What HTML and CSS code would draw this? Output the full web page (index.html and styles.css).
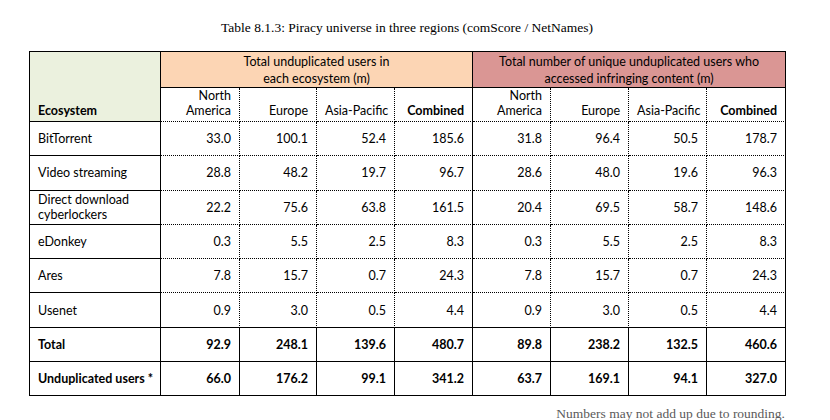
FILE: index.html
```html
<!DOCTYPE html>
<html>
<head>
<meta charset="utf-8">
<link rel="stylesheet" href="styles.css">
</head>
<body>
<div class="page">
  <div class="title">Table 8.1.3: Piracy universe in three regions (comScore / NetNames)</div>
  <table class="data">
    <colgroup>
      <col class="c-eco"><col class="c-a"><col class="c-b"><col class="c-c"><col class="c-d">
      <col class="c-e"><col class="c-f"><col class="c-g"><col class="c-h">
    </colgroup>
    <thead>
      <tr class="hrow1">
        <th class="eco-head" rowspan="2">Ecosystem</th>
        <th class="grp grp1" colspan="4">Total unduplicated users in<br>each ecosystem (m)</th>
        <th class="grp grp2" colspan="4">Total number of unique unduplicated users who<br>accessed infringing content (m)</th>
      </tr>
      <tr class="hrow2">
        <th class="sub">North<br>America</th>
        <th class="sub">Europe</th>
        <th class="sub">Asia-Pacific</th>
        <th class="sub bold gend">Combined</th>
        <th class="sub">North<br>America</th>
        <th class="sub">Europe</th>
        <th class="sub">Asia-Pacific</th>
        <th class="sub bold last">Combined</th>
      </tr>
    </thead>
    <tbody>
      <tr><td class="eco">BitTorrent</td><td>33.0</td><td>100.1</td><td>52.4</td><td class="gend">185.6</td><td>31.8</td><td>96.4</td><td>50.5</td><td class="last">178.7</td></tr>
      <tr><td class="eco">Video streaming</td><td>28.8</td><td>48.2</td><td>19.7</td><td class="gend">96.7</td><td>28.6</td><td>48.0</td><td>19.6</td><td class="last">96.3</td></tr>
      <tr><td class="eco">Direct download<br>cyberlockers</td><td>22.2</td><td>75.6</td><td>63.8</td><td class="gend">161.5</td><td>20.4</td><td>69.5</td><td>58.7</td><td class="last">148.6</td></tr>
      <tr><td class="eco">eDonkey</td><td>0.3</td><td>5.5</td><td>2.5</td><td class="gend">8.3</td><td>0.3</td><td>5.5</td><td>2.5</td><td class="last">8.3</td></tr>
      <tr><td class="eco">Ares</td><td>7.8</td><td>15.7</td><td>0.7</td><td class="gend">24.3</td><td>7.8</td><td>15.7</td><td>0.7</td><td class="last">24.3</td></tr>
      <tr class="pre-total"><td class="eco">Usenet</td><td>0.9</td><td>3.0</td><td>0.5</td><td class="gend">4.4</td><td>0.9</td><td>3.0</td><td>0.5</td><td class="last">4.4</td></tr>
      <tr class="sumrow"><td class="eco">Total</td><td>92.9</td><td>248.1</td><td>139.6</td><td class="gend">480.7</td><td>89.8</td><td>238.2</td><td>132.5</td><td class="last">460.6</td></tr>
      <tr class="sumrow"><td class="eco">Unduplicated users *</td><td>66.0</td><td>176.2</td><td>99.1</td><td class="gend">341.2</td><td>63.7</td><td>169.1</td><td>94.1</td><td class="last">327.0</td></tr>
    </tbody>
  </table>
  <div class="note">Numbers may not add up due to rounding.</div>
</div>
</body>
</html>
```

FILE: styles.css
```css
html, body {
  margin: 0;
  padding: 0;
  background: #ffffff;
}

.page {
  width: 830px;
  padding: 19px 0 0 29px;
  box-sizing: border-box;
  font-family: "Lato", "Liberation Sans", sans-serif;
  color: #000;
}

.title {
  width: 756px;
  text-align: center;
  font-family: "Liberation Serif", serif;
  font-size: 13.5px;
  line-height: 18px;
  margin-bottom: 14px;
  color: #000;
}

.data {
  border-collapse: separate;
  border-spacing: 0;
  table-layout: fixed;
  width: 756px;
  border-top: 1px solid #000;
  border-left: 1px solid #000;
  font-size: 12.5px;
}

.c-eco { width: 131px; }
.c-a { width: 79px; }
.c-b { width: 77px; }
.c-c { width: 78px; }
.c-d { width: 78px; }
.c-e { width: 78px; }
.c-f { width: 78px; }
.c-g { width: 78px; }
.c-h { width: 79px; }

.data th, .data td {
  padding: 0 8px;
  text-align: right;
  vertical-align: middle;
  border-right: 1px dotted #000;
  border-bottom: 1px dotted #000;
  font-weight: normal;
  line-height: 15px;
  white-space: nowrap;
}

.data .eco, .data .eco-head {
  text-align: left;
  border-right: 1px solid #000;
  border-bottom: 1px solid #000;
}

.eco-head {
  background: #ebf1de;
  font-weight: bold !important;
  vertical-align: bottom !important;
  padding-bottom: 3px !important;
}

.hrow1 { height: 36px; }
.hrow2 { height: 34px; }

.grp {
  text-align: center !important;
  line-height: 17px !important;
  border-bottom: 1px solid #000 !important;
  border-right: 1px solid #000 !important;
  padding-top: 1px !important;
}
.grp1 { background: #fcd5b4; }
.grp2 { background: #da9694; }

.sub {
  vertical-align: bottom !important;
  padding-bottom: 3px !important;
}
.bold { font-weight: bold !important; }

.data .gend, .data .last {
  border-right: 1px solid #000;
}

.data tbody tr { height: 34.3px; }

.pre-total td { border-bottom: 1px solid #000; }

.sumrow td {
  font-weight: bold;
  border-bottom: 1px solid #000;
  border-right: 1px solid #000;
}

.note {
  width: 756px;
  text-align: right;
  font-family: "Liberation Serif", serif;
  font-size: 13.5px;
  line-height: 16px;
  color: #5a5a5a;
  margin-top: 10px;
}
```
